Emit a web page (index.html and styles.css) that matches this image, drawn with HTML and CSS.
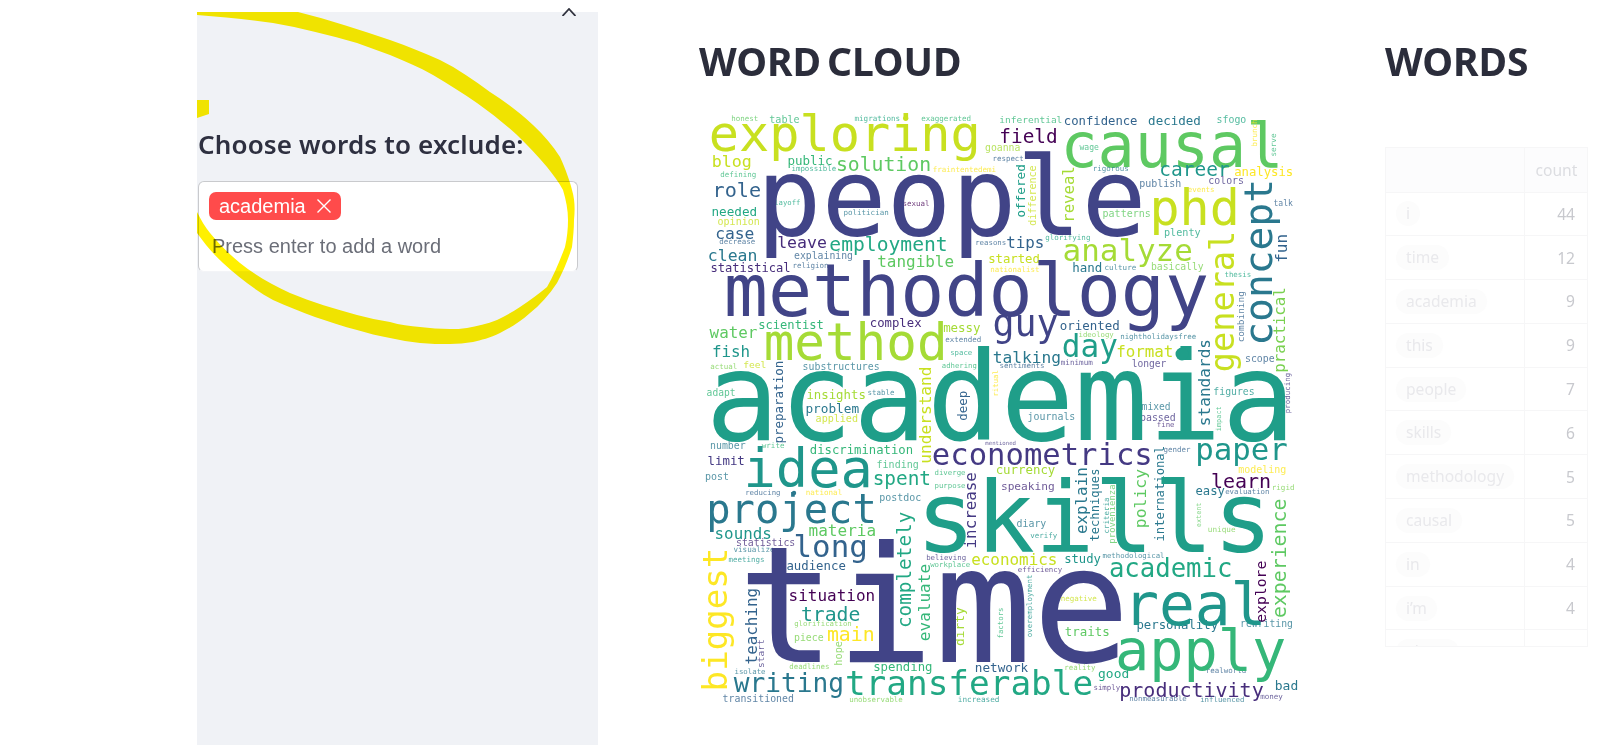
FILE: index.html
```html
<!DOCTYPE html>
<html lang="en">
<head>
<meta charset="utf-8">
<title>Word cloud</title>
<link rel="stylesheet" href="styles.css">
</head>
<body>
<div class="app">
  <aside class="sidebar">
    <svg class="close-icon" viewBox="0 0 14 8" width="14" height="8"><path d="M.5 8L7 1l6.500 7"/></svg>
    <h3 class="side-label">Choose words to exclude:</h3>
    <div class="multiselect">
      <span class="tag">academia
        <svg class="tag-x" viewBox="0 0 14 14" width="14" height="14"><path d="M.5.5l13 13M13.500.5l-13 13"/></svg>
      </span>
      <div class="placeholder">Press enter to add a word</div>
    </div>
    <svg class="scribble" viewBox="197 12 401 733" width="401" height="733">
      <path d="M197 12H298C330 20 360 30 390 40C408 46 424 53 440 60C458 69 474 80 490 92C506 102 520 113 533 125C544 135 553 146 560 157C566 170 570 182 572 190C575 200 575 210 574 220C574 229 573 238 572 247C568 260 563 272 557 283C549 295 540 305 530 313C520 322 510 328 500 333C490 338 481 340 473 342C465 343 458 344 450 344C440 344 430 344 420 343C410 342 400 340 390 338C378 336 368 333 357 330C330 323 300 312 273 300C255 290 238 277 223 263C213 254 205 244 197 233V212C201 220 205 227 210 233C219 244 229 254 240 263C255 275 272 285 290 293C312 302 335 309 357 315C368 318 379 320 390 322C400 325 410 326 420 327C430 328 440 329 450 329C456 329 461 329 467 328C477 326 487 324 497 320C505 316 513 312 520 307C530 300 539 294 547 287C554 275 560 260 565 247C567 238 568 229 568 220C568 210 566 200 563 190C559 182 553 175 547 167C538 156 528 146 517 135C505 124 491 113 477 103C463 93 448 84 433 75C419 67 404 61 390 55C379 51 368 47 357 43C330 35 301 28 273 23C247 19 222 17 197 15Z"/>
      <path d="M197 100H209V114L197 118Z"/>
    </svg>
  </aside>
  <main class="content">
    <section class="cloud-col">
      <h1 class="title">WORD CLOUD</h1>
      <svg id="cloud" class="cloud" viewBox="695 105 610 610" width="610" height="610"></svg>
    </section>
    <section class="words-col">
      <h1 class="title">WORDS</h1>
      <div class="table-wrap">
        <table class="freq">
          <thead><tr><th></th><th>count</th></tr></thead>
          <tbody>
            <tr><td><span class="pill">i</span></td><td>44</td></tr>
            <tr><td><span class="pill">time</span></td><td>12</td></tr>
            <tr><td><span class="pill">academia</span></td><td>9</td></tr>
            <tr><td><span class="pill">this</span></td><td>9</td></tr>
            <tr><td><span class="pill">people</span></td><td>7</td></tr>
            <tr><td><span class="pill">skills</span></td><td>6</td></tr>
            <tr><td><span class="pill">methodology</span></td><td>5</td></tr>
            <tr><td><span class="pill">causal</span></td><td>5</td></tr>
            <tr><td><span class="pill">in</span></td><td>4</td></tr>
            <tr><td><span class="pill">i’m</span></td><td>4</td></tr>
            <tr><td><span class="pill">about</span></td><td>4</td></tr>
          </tbody>
        </table>
      </div>
    </section>
  </main>
</div>
<script src="cloud.js"></script>
</body>
</html>
```
FILE: styles.css
```css
* { box-sizing: border-box; }
html, body { margin: 0; height: 745px; overflow: hidden; background: #fff; }
.app { display: flex; height: 745px; padding-left: 197px; font-family: "Noto Sans", sans-serif; color: #262730; }
.sidebar { position: relative; flex: 0 0 401px; margin-top: 12px; height: 733px; background: #f0f2f6; padding: 114px 0 0 1px; }
.close-icon { position: absolute; left: 365px; top: -4px; fill: none; stroke: #31333f; stroke-width: 1.8; }
.side-label { margin: 0; font-size: 26px; line-height: 36px; font-weight: 600; letter-spacing: .15px; color: #2e3040; }
.multiselect { margin-top: 19px; width: 380px; height: 91px; background: #fff; border: 1px solid #c9cacd; border-bottom-color: #f3f4f7; border-radius: 6px; padding: 10px 10px; font-family: "Liberation Sans", Arial, sans-serif; }
.tag { display: inline-flex; align-items: center; gap: 11px; height: 28px; padding: 0 10px; background: #ff4b4b; border-radius: 7px; color: #fff; font-size: 20px; }
.tag-x { fill: none; stroke: #fff; stroke-width: 1.4; }
.placeholder { margin-top: 14px; padding-left: 3px; font-size: 20px; line-height: 24px; color: #6b6e78; }
.scribble { position: absolute; left: 0; top: 0; fill: #fff000; mix-blend-mode: multiply; pointer-events: none; }
.content { flex: 1; display: flex; }
.cloud-col { flex: 0 0 787px; padding-left: 101px; }
.words-col { flex: 1; }
.title { margin: 34px 0 0; font-size: 39px; line-height: 54px; font-weight: 700; letter-spacing: -.1px; word-spacing: -4px; color: #2b2d3b; }
.cloud { display: block; margin: 17px 0 0 -5px; filter: blur(.6px); }
.cloud text { font-family: "DejaVu Sans Mono", monospace; }
.cloud .tiny { fill-opacity: .78; }
.words-col .title { margin-bottom: 59px; }
.table-wrap { width: 203px; height: 500px; overflow: hidden; border: 1px solid #f6f6f7; }
.freq { width: 100%; border-collapse: collapse; table-layout: fixed; font-size: 15.6px; }
.freq th { height: 44px; background: #fcfcfd; font-weight: 400; color: #dcdde1; text-align: right; padding: 0 11px; border-bottom: 1px solid #f6f6f7; }
.freq th:first-child, .freq td:first-child { width: 138px; border-right: 1px solid #f6f6f7; text-align: left; }
.freq td { height: 43.8px; padding: 0 12px 0 10px; text-align: right; color: #c8c9ce; border-bottom: 1px solid #f6f6f7; }
.pill { display: inline-block; height: 25px; line-height: 24px; padding: 0 10px; background: #fcfcfc; border-radius: 13px; color: #e9e9ec; }
```
FILE: cloud.js
```js
var C = {m:'#440154',n:'#472d7b',k:'#443983',b:'#414487',c:'#33638d',d:'#2a788e',e:'#1f968b',f:'#1f9e89',t:'#22a884',g:'#35b779',s:'#5ec962',h:'#7ad151',l:'#a5db36',i:'#c8e020',j:'#fde725'};
// word, start, end, baseline, colour, vertical
var W = [
['honest',732.7,758.7,120.7,'s'],['table',771,800,122.7,'g'],['migrations',856,900.7,120.7,'t'],['exaggerated',922.7,971.7,120.7,'g'],
['exploring',713.3,978.3,150.7,'i'],['solution',838.3,930.7,171,'s'],['public',789.3,832.7,165,'g'],['impossible',793,836.7,170.7,'t'],
['blog',714,751.7,167.3,'i'],['defining',721.7,756.7,177.3,'g'],['fraintentedemi',934.3,996.7,171.7,'j'],['role',715,760.7,197.3,'c'],
['layoff',775.7,801,205.3,'t'],['sexual',904,930,206,'m'],['needed',713.3,757.3,215.7,'t'],['politician',845,889.3,215.3,'d'],
['opinion',719.3,760,225,'i'],['case',717.3,754.3,239.3,'c'],['decrease',720.7,755.7,244.3,'c'],['leave',779.3,826.7,248.3,'n'],
['employment',831.7,947.3,251.3,'t'],['reasons',976.7,1006.7,245,'c'],['tips',1008.3,1044.3,247.7,'c'],['clean',710,757.3,260.7,'d'],
['explaining',795.7,853.3,259,'c'],['tangible',879.3,954,267.3,'s'],['statistical',712.3,790.7,271.7,'n'],['religion',794,829,267.7,'c'],
['started',990,1040,263.3,'i'],['nationalist',991.7,1040,272.3,'j'],['goanna',986.7,1020.7,150.7,'l'],['field',1001.7,1057.3,143.3,'m'],
['inferential',1001,1062.7,122.7,'g'],['confidence',1065.7,1137.7,125,'c'],['decided',1150,1201,125,'d'],['sfogo',1218.3,1246.7,122.7,'t'],
['causal',1065.7,1280,166.7,'s'],['brunch',146,120,1258,'j',1],['serve',156,134,1276.7,'g',1],['wage',1081,1099.3,150,'g'],
['respect',994,1024.3,160.7,'c'],['rigorous',1094.3,1129.3,171,'d'],['career',1161.7,1229.3,175.7,'e'],['analysis',1236,1293.3,175.7,'j'],
['colors',1210,1244.3,184,'k'],['publish',1141,1181.7,187.3,'c'],['events',1189.3,1215,191.7,'j'],['offered',216.7,165,1026,'f',1],
['difference',225,166,1036.7,'i',1],['reveal',221.7,167.3,1075,'l',1],['patterns',1104.3,1151,216.7,'s'],['phd',1154,1237.3,225,'i'],
['concept',343,181.7,1273,'d',1],['general',370,233,1235,'i',1],['fun',261.7,235,1288.3,'c',1],['talk',1275,1293.3,206,'c'],
['plenty',1165.7,1201,236,'t'],['glorifying',1046.7,1091,240,'t'],['analyze',1065.7,1191.7,261,'l'],['hand',1074,1102.3,272.3,'d'],
['culture',1106,1136.7,270,'d'],['basically',1152.7,1204,270,'h'],['thesis',1226,1251.7,276.7,'t'],['combining',341.7,291.7,1245,'c',1],
['practical',371.7,288.3,1286,'h',1],['people',765,1140,235,'b'],['methodology',730,1205,316,'b'],['method',768.3,945,360,'l'],
['guy',996,1057,336,'b'],['day',1065,1116.7,356.7,'f'],['oriented',1061.7,1120,330,'c'],['ideology',1080,1114.3,336.7,'h'],
['nightholidaysfree',1121.7,1196.7,339.3,'d'],['format',1118.3,1173.3,357.3,'i'],['talking',995,1061,363.3,'d'],['minimum',1062.3,1093.3,365,'k'],
['sentiments',1001,1045,368.3,'c'],['longer',1133.3,1166.7,367.3,'k'],['scope',1246.7,1275,361.7,'c'],['standards',425,340,1210.7,'d',1],
['figures',1215,1255,395,'e'],['producing',412.7,373.3,1291,'k',1],['mixed',1143.3,1171,410,'d'],['passed',1141.7,1176,420.7,'k'],
['fine',1158.3,1175,426.7,'n'],['journals',1029.3,1075.7,420,'d'],['impact',430.7,406.7,1221.7,'g',1],['mentioned',986.7,1016.7,445,'k'],
['academia',715,1288,440,'f'],['gender',1165,1191,451.7,'c'],['econometrics',935,1151.7,465,'k'],['paper',1198.3,1286.7,460,'e'],
['international',540.7,446.7,1165,'d',1],['policy',527,470,1146.7,'s',1],['currency',997.5,1055.5,474,'l'],['explain',533,468.3,1088,'d',1],
['techniques',540.7,469.3,1100.3,'d',1],['speaking',1002.7,1055,490,'n'],['learn',1213.3,1270.7,487.7,'m'],['modeling',1240,1286.7,472.7,'j'],
['easy',1197.3,1225,495,'d'],['evaluation',1226.7,1270,494,'c'],['rigid',1273.3,1295,490,'h'],['criteria',533,498,1110,'e',1],
['provenienza',543,485,1116,'s',1],['extent',526.7,503,1201.7,'s',1],['experience',616.7,500,1286.7,'s',1],['skills',924,1266.7,551.7,'f'],
['scientist',760,824,329.3,'g'],['complex',871.7,921.7,326.7,'n'],['messy',945,980.7,331.7,'l'],['extended',946.7,981.7,341.7,'c'],
['water',711.7,757.3,338.3,'s'],['fish',714,750,357.3,'e'],['space',951.7,972.7,355,'t'],['feel',745,766.7,368.3,'i'],
['actual',711.7,737.7,368.7,'h'],['substructures',804.3,880,370,'d'],['adhering',943.3,977.3,368.3,'g'],['preparation',442.7,361.7,784.3,'c',1],
['understand',462.7,367.3,931.7,'i',1],['deep',420,391.7,968,'c',1],['ritual',396,370.7,999,'j',1],['adapt',708.3,736,396,'g'],
['insights',808.3,866,399.3,'l'],['stable',869,895,395,'d'],['problem',807.3,859.3,412.7,'d'],['applied',817.3,858.3,421.7,'i'],
['number',711.7,746,449.3,'d'],['write',763.3,785,448.3,'g'],['discrimination',811.7,913.3,454,'g'],['idea',748.3,870,486.7,'e'],
['limit',709.3,745,465,'k'],['finding',878.3,919,468.3,'g'],['post',706.7,729.3,480,'d'],['spent',875,930.7,485,'t'],
['diverge',936,966,475,'g'],['purpose',936,966,488.3,'g'],['reducing',746.7,781,495,'c'],['national',807.3,842.7,495,'j'],
['postdoc',881,921.7,501,'d'],['increase',547.3,473.3,976.7,'k',1],['project',710,875,523.3,'d'],['sounds',716.7,771.7,539.3,'e'],
['materia',810.7,876,536,'s'],['long',796.7,866.7,557.3,'c'],['statistics',737.7,795.7,546,'n'],['visualize',735,775,551.7,'d'],
['meetings',730,765,561.7,'e'],['audience',788.3,846,570,'c'],['believing',927.7,966.7,560,'k'],['workplace',931.7,970.7,567.3,'g'],
['economics',973.3,1057.3,565,'i'],['study',1066,1101,563.3,'e'],['completely',626.7,513,911.7,'t',1],['evaluate',640,565,930.7,'g',1],
['biggest',689,550,728.3,'j',1],['teaching',663.3,589,758.3,'c',1],['start',667.3,640,765,'k',1],['situation',790.7,875,600.7,'m'],
['trade',803.3,860,620.7,'e'],['glorification',795.7,852.3,626,'h'],['main',829.3,874.3,641,'j'],['piece',795.7,824,640.7,'h'],
['dirty',645,608,965,'l',1],['hope',665,641.7,843.3,'h',1],['deadlines',790.7,830,669,'h'],['spending',875,932.7,671,'g'],
['network',976.7,1028.3,671.7,'c'],['isolate',736,766,674,'d'],['writing',736.7,843.3,691.7,'d'],['transferable',848.3,1091.7,695,'t'],
['transitioned',724.3,794.3,701.7,'c'],['unobservable',850.7,903.3,701.7,'h'],['increased',959.3,1000,701.7,'e'],['time',750,1120,661.7,'b'],
['good',1100,1129.3,678.3,'t'],['reality',1065.7,1096,670,'h'],['realworld',1207.3,1246.7,672.7,'c'],['simply',1095,1120.7,690,'n'],
['productivity',1121.7,1263.3,696.7,'n'],['bad',1276.7,1298.3,690,'d'],['money',1261.7,1283.3,699.3,'k'],['nonmeasurable',1130.7,1187.3,700.7,'c'],
['influenced',1201.7,1245,701.7,'d'],['apply',1120,1283.3,670,'g'],['traits',1066.7,1110,636,'s'],['personality',1138.3,1218.3,629.3,'d'],
['rewriting',1241.7,1293.3,627.3,'d'],['academic',1111.7,1231.7,576.7,'t'],['real',1128.3,1263.3,625,'e'],['explore',621.7,561.7,1266.7,'m',1],
['efficiency',1019.3,1062.7,572.3,'n'],['methodological',1104,1165,557.7,'d'],['overemployment',636.7,575,1033,'e',1],['factors',638,608,1004,'g',1],
['negative',1062.3,1097.3,600.7,'i'],['diary',1018.3,1046.7,526.7,'d'],['verify',1031.7,1057.7,538.3,'e'],['unique',1209.3,1236,532.3,'h']
];
var DOTS = [[906.7,118.3,2.6,'i'],[1183,354,6.5,'f'],[795,493,2.2,'d']];
var NS = 'http://www.w3.org/2000/svg', svg = document.getElementById('cloud');
W.forEach(function (w) {
  var vert = w[5], span = Math.abs(w[2] - w[1]), size = span / (0.602 * w[0].length - 0.14), inset = 0.07 * size;
  var t = document.createElementNS(NS, 'text');
  t.textContent = w[0];
  t.setAttribute('font-size', size.toFixed(2));
  t.setAttribute('fill', C[w[4]]);
  if (size < 12) t.setAttribute('class', 'tiny');
  if (vert) {
    var y = w[1] + inset;
    t.setAttribute('x', w[3]); t.setAttribute('y', y);
    t.setAttribute('transform', 'rotate(-90 ' + w[3] + ' ' + y + ')');
  } else {
    t.setAttribute('x', w[1] - inset); t.setAttribute('y', w[3]);
  }
  svg.appendChild(t);
});
DOTS.forEach(function (d) {
  var c = document.createElementNS(NS, 'circle');
  c.setAttribute('cx', d[0]); c.setAttribute('cy', d[1]); c.setAttribute('r', d[2]); c.setAttribute('fill', C[d[3]]);
  svg.appendChild(c);
});
```
